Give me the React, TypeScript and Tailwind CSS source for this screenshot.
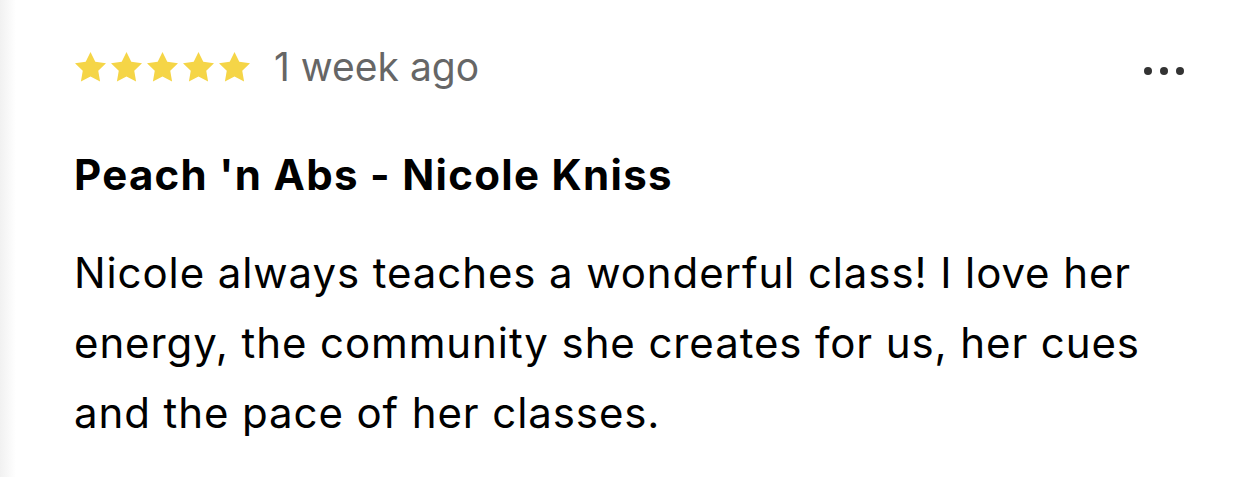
import React from 'react';

const Star = () => (
  <svg viewBox="2 2 20 20" className="w-[31px] h-[31px]" fill="#f5d547">
    <polygon points="12 2 15.09 8.26 22 9.27 17 14.14 18.18 21.02 12 17.77 5.82 21.02 7 14.14 2 9.27 8.91 8.26" />
  </svg>
);

export default function App() {
  return (
    <div className="flex w-[1260px] h-[477px] bg-white overflow-hidden font-['Inter',sans-serif]">
      {/* faint edge shade on the left */}
      <div className="w-[16px] shrink-0 bg-gradient-to-r from-[#f1f1f1] to-white" />

      <div className="flex-1 pl-[58px] pr-[76px] pt-[43px]">
        <div className="flex items-center justify-between h-[48px]">
          <div className="flex items-center">
            <div className="flex items-center gap-[5px] ml-[1px]">
              {[0, 1, 2, 3, 4].map(i => (
                <Star key={i} />
              ))}
            </div>
            <span className="ml-[24px] text-[39px] leading-[48px] text-[#666666]">1 week ago</span>
          </div>
          <div className="flex items-center gap-[8px] mt-[8px]">
            <span className="w-[8px] h-[8px] rounded-full bg-[#333]" />
            <span className="w-[8px] h-[8px] rounded-full bg-[#333]" />
            <span className="w-[8px] h-[8px] rounded-full bg-[#333]" />
          </div>
        </div>

        <h2 className="mt-[59px] text-[42px] leading-[50px] font-bold tracking-[1.3px] text-black">
          Peach 'n Abs - Nicole Kniss
        </h2>

        <p className="mt-[38px] text-[42px] leading-[70px] tracking-[0.9px] text-black max-w-[1100px]">
          Nicole always teaches a wonderful class! I love her energy, the community she creates for us, her cues and the pace of her classes.
        </p>
      </div>
    </div>
  );
}
